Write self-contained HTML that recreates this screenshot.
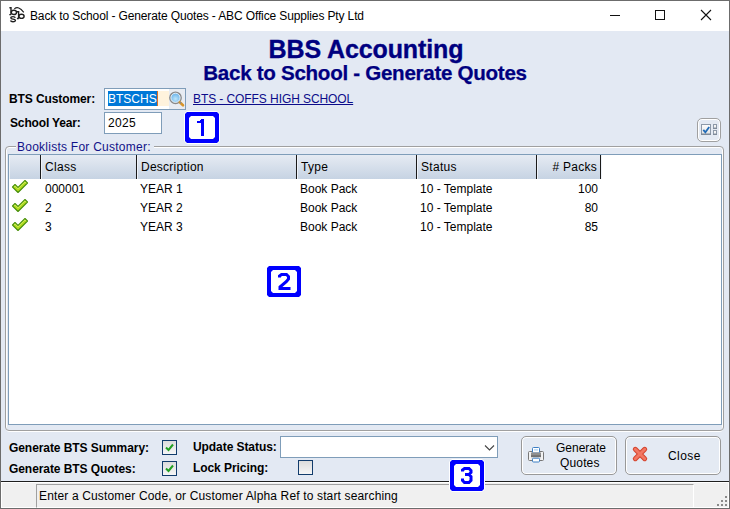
<!DOCTYPE html>
<html><head><meta charset="utf-8">
<style>
*{margin:0;padding:0;box-sizing:border-box}
html,body{width:730px;height:509px;overflow:hidden;background:#6c6c6c}
body{position:relative;font-family:"Liberation Sans",sans-serif;font-size:12px;color:#000}
.a{position:absolute;white-space:nowrap}
#title{left:1px;top:1px;width:728px;height:30px;background:#fff}
#client{left:1px;top:31px;width:728px;height:450px;background:#e3e9f3}
#sep{left:1px;top:481px;width:728px;height:1px;background:#1e1e1e}
#status{left:1px;top:482px;width:728px;height:26px;background:#f0f0f0;border:1px solid #fff}
.lbl{font-weight:bold;font-size:12px;line-height:12px}
.t12{font-size:12px;line-height:12px}
.navy{color:#000080}
.inp{border:1px solid #7f9db9;background:#fff}
.hdr{background:linear-gradient(#e6ebf3,#c6d3e3);box-shadow:inset 1px 0 0 #eef2f7}
.vs{width:1px;background:#1a1a1a;box-shadow:1px 0 0 #eef2f8}
.chk{width:15px;height:15px;border:1px solid #123c6c;background:linear-gradient(#dcdcdc,#f6f6f6)}
.badge{width:35px;height:32px;border:4px solid #0000ff;border-radius:4px;background:#fff;color:#0000ff;font-weight:bold;text-align:center;outline:1px solid #fff}
.btn{border:1px solid #999;border-radius:5px;background:#e4eaf3;box-shadow:inset 0 0 0 1px #fff}
</style></head><body>
<div class="a" id="title"></div>
<div class="a" id="client"></div>
<div class="a" id="sep"></div>
<div class="a" id="status"></div>

<!-- title bar -->
<svg class="a" style="left:6px;top:4px" width="24" height="22" viewBox="0 0 24 22">
<g fill="none" stroke="#1e1e1e" stroke-width="1.4">
<path d="M3.4 3.7H5V10.6M3.3 10.6H5.2"/>
<ellipse cx="7.9" cy="8.4" rx="2.6" ry="2.1"/>
<path d="M9.3 13.7Q9 12.6 7 12.6Q4.8 12.6 4.8 13.9Q5 15 7 15.1Q9.4 15.3 9.4 16.6Q9.2 17.7 7 17.7Q4.9 17.7 4.5 16.5"/>
<path d="M11 7.8H12.6V14.5M10.9 14.5H12.8"/>
<ellipse cx="15.5" cy="12.3" rx="2.6" ry="2.1"/>
</g>
<path d="M8.3 4.9Q12.5 1.2 17.8 8.3" fill="none" stroke="#1e1e1e" stroke-width="1.1"/>
</svg>
<div class="a t12" style="left:30px;top:10px;letter-spacing:-0.13px;color:#000">Back to School - Generate Quotes - ABC Office Supplies Pty Ltd</div>
<div class="a" style="left:610px;top:15px;width:10px;height:1px;background:#111"></div>
<div class="a" style="left:655px;top:10px;width:10px;height:10px;border:1px solid #111"></div>
<svg class="a" style="left:700px;top:9px" width="12" height="12" viewBox="0 0 12 12"><path d="M1 1 L11 11 M11 1 L1 11" stroke="#111" stroke-width="1.1"/></svg>

<!-- headings -->
<div class="a navy" style="left:1px;width:730px;text-align:center;top:37px;font-weight:bold;font-size:25px;line-height:25px;letter-spacing:-0.1px;-webkit-text-stroke:0.35px #000080">BBS Accounting</div>
<div class="a navy" style="left:0;width:730px;text-align:center;top:62px;font-weight:bold;font-size:20.6px;line-height:21px;letter-spacing:-0.3px;-webkit-text-stroke:0.25px #000080">Back to School - Generate Quotes</div>

<!-- customer -->
<div class="a lbl" style="left:9px;top:93px;letter-spacing:-0.1px">BTS Customer:</div>
<div class="a lbl" style="left:10px;top:117px;letter-spacing:-0.15px">School Year:</div>
<div class="a inp" style="left:104px;top:88px;width:82px;height:22px"></div>
<div class="a" style="left:108px;top:91px;width:61px;height:15px;background:#fff3dd"></div>
<div class="a" style="left:108px;top:91px;width:49px;height:15px;background:#0078d7"></div>
<div class="a" style="left:157px;top:91px;width:1px;height:15px;background:#e07020"></div>
<div class="a t12" style="left:108px;top:93px;color:#fff">BTSCHS</div>
<div class="a" style="left:169px;top:89px;width:16px;height:20px;background:#e8ecf2"></div>
<svg class="a" style="left:166px;top:88px" width="22" height="22" viewBox="0 0 22 22">
<defs><radialGradient id="gl" cx="0.5" cy="0.6" r="0.6"><stop offset="0" stop-color="#bfe6fa"/><stop offset="1" stop-color="#58a8e6"/></radialGradient></defs>
<circle cx="9.5" cy="9.8" r="5.6" fill="url(#gl)" stroke="#8a8a8a" stroke-width="1.6"/>
<circle cx="9.5" cy="9.8" r="4.6" fill="none" stroke="#fff" stroke-width="0.8"/>
<path d="M13.8 14.3L17 17.3" stroke="#d8952a" stroke-width="2.6" stroke-linecap="round"/>
<path d="M14 14.2L15 15.2" stroke="#7a8aa0" stroke-width="1.5"/>
</svg>
<div class="a t12 navy" style="left:193px;top:93px;text-decoration:underline;letter-spacing:-0.08px;color:#0c0c8a">BTS - COFFS HIGH SCHOOL</div>
<div class="a inp" style="left:104px;top:112px;width:58px;height:22px"></div>
<div class="a t12" style="left:108px;top:117px;letter-spacing:0.35px">2025</div>

<svg class="a" style="left:184px;top:111px" width="36" height="33" viewBox="-1 -1 36 33">
<path d="M2 -1H32L35 2V29L32 32H2L-1 29V2Z" fill="#fff"/>
<path d="M2 0H32L34 2V29L32 31H2L0 29V2Z" fill="#0000ff"/>
<path d="M6 4H28L30 6V25L28 27H6L4 25V6Z" fill="#fff"/>
<path d="M16 7H19V24H16V11H12V9H15V8H16Z" fill="#0000ff"/></svg>

<!-- small top-right button -->
<div class="a" style="left:697px;top:118px;width:24px;height:24px;border:1px solid #a0a0a0;border-radius:5px;background:#e4eaf3;box-shadow:inset 0 0 0 1px #fff"></div>
<svg class="a" style="left:700px;top:123px" width="20" height="14" viewBox="0 0 20 14">
  <defs><linearGradient id="cbg" x1="0" y1="0" x2="0" y2="1"><stop offset="0" stop-color="#fdfdfd"/><stop offset="1" stop-color="#e2e2e2"/></linearGradient></defs>
  <rect x="1.5" y="1.5" width="9" height="10" fill="url(#cbg)" stroke="#8d99a8"/>
  <rect x="1" y="10.5" width="10" height="1.5" fill="#7f8b99"/>
  <path d="M3.3 6.8 L5.4 9.3 L9.2 4" fill="none" stroke="#1f6bb8" stroke-width="1.8"/>
  <rect x="13.5" y="1.5" width="3" height="3.5" fill="#f4f4f4" stroke="#8d99a8"/>
  <rect x="13" y="5" width="4" height="1" fill="#7f8b99"/>
  <rect x="13.5" y="7.5" width="3" height="3.5" fill="#f4f4f4" stroke="#8d99a8"/>
  <rect x="13" y="11" width="4" height="1" fill="#7f8b99"/>
</svg>

<!-- group box -->
<div class="a" style="left:6px;top:147px;width:717px;height:285px;border:1px solid #fff;border-radius:3px"></div>
<div class="a" style="left:5px;top:146px;width:719px;height:285px;border:1px solid #a0a0a0;border-radius:4px"></div>
<div class="a" style="left:16px;top:140px;width:138px;height:12px;background:#e3e9f3"></div>
<div class="a t12" style="left:17px;top:141px;color:#121288;letter-spacing:0.25px">Booklists For Customer:</div>

<!-- grid -->
<div class="a" style="left:8px;top:154px;width:714px;height:271px;border:1px solid #7f9db9;background:#fff"></div>
<div class="a hdr" style="left:9px;top:155px;width:592px;height:24px"></div>
<div class="a vs" style="left:40px;top:155px;height:24px"></div>
<div class="a vs" style="left:136px;top:155px;height:24px"></div>
<div class="a vs" style="left:296px;top:155px;height:24px"></div>
<div class="a vs" style="left:416px;top:155px;height:24px"></div>
<div class="a vs" style="left:536px;top:155px;height:24px"></div>
<div class="a vs" style="left:600px;top:155px;height:24px"></div>
<div class="a t12" style="left:45px;top:161px;letter-spacing:0.3px">Class</div>
<div class="a t12" style="left:141px;top:161px;letter-spacing:0.25px">Description</div>
<div class="a t12" style="left:301px;top:161px;letter-spacing:0.3px">Type</div>
<div class="a t12" style="left:421px;top:161px;letter-spacing:0.3px">Status</div>
<div class="a t12" style="left:527px;width:70px;text-align:right;top:161px;letter-spacing:0.25px">#&nbsp;Packs</div>

<div id="rows"></div>
<!-- rows -->
<div class="a t12" style="left:45px;top:183px">000001</div>
<div class="a t12" style="left:140px;top:183px">YEAR 1</div>
<div class="a t12" style="left:300px;top:183px">Book Pack</div>
<div class="a t12" style="left:420px;top:183px">10 - Template</div>
<div class="a t12" style="left:537px;width:61px;text-align:right;top:183px">100</div>

<div class="a t12" style="left:45px;top:202px">2</div>
<div class="a t12" style="left:140px;top:202px">YEAR 2</div>
<div class="a t12" style="left:300px;top:202px">Book Pack</div>
<div class="a t12" style="left:420px;top:202px">10 - Template</div>
<div class="a t12" style="left:537px;width:61px;text-align:right;top:202px">80</div>

<div class="a t12" style="left:45px;top:221px">3</div>
<div class="a t12" style="left:140px;top:221px">YEAR 3</div>
<div class="a t12" style="left:300px;top:221px">Book Pack</div>
<div class="a t12" style="left:420px;top:221px">10 - Template</div>
<div class="a t12" style="left:537px;width:61px;text-align:right;top:221px">85</div>

<svg class="a" style="left:11px;top:179px" width="18" height="15" viewBox="0 0 18 15"><path d="M1.5 8 L4 5.5 L7 8.5 L14 1.5 L16.5 4 L7 13.5 Z" fill="#b2dc20" stroke="#488f0c" stroke-width="1.1" stroke-linejoin="round"/><path d="M3 7.8 L4 6.9 L7 9.8 L14 2.9 L15 3.9" fill="none" stroke="#d4f060" stroke-width="0.9"/></svg>
<svg class="a" style="left:11px;top:198px" width="18" height="15" viewBox="0 0 18 15"><path d="M1.5 8 L4 5.5 L7 8.5 L14 1.5 L16.5 4 L7 13.5 Z" fill="#b2dc20" stroke="#488f0c" stroke-width="1.1" stroke-linejoin="round"/><path d="M3 7.8 L4 6.9 L7 9.8 L14 2.9 L15 3.9" fill="none" stroke="#d4f060" stroke-width="0.9"/></svg>
<svg class="a" style="left:11px;top:217px" width="18" height="15" viewBox="0 0 18 15"><path d="M1.5 8 L4 5.5 L7 8.5 L14 1.5 L16.5 4 L7 13.5 Z" fill="#b2dc20" stroke="#488f0c" stroke-width="1.1" stroke-linejoin="round"/><path d="M3 7.8 L4 6.9 L7 9.8 L14 2.9 L15 3.9" fill="none" stroke="#d4f060" stroke-width="0.9"/></svg>

<svg class="a" style="left:266px;top:265px" width="36" height="33" viewBox="-1 -1 36 33">
<path d="M2 -1H32L35 2V29L32 32H2L-1 29V2Z" fill="#fff"/>
<path d="M2 0H32L34 2V29L32 31H2L0 29V2Z" fill="#0000ff"/>
<path d="M6 4H28L30 6V25L28 27H6L4 25V6Z" fill="#fff"/>
<path d="M12.5 11.5V10L14.5 8.5H19.5L21.5 10.5V13L19.5 15.5L13 21V22.5H23.5" fill="none" stroke="#0000ff" stroke-width="3" stroke-linejoin="miter"/></svg>

<!-- bottom controls -->
<div class="a lbl" style="left:9px;top:442px;letter-spacing:-0.07px">Generate BTS Summary:</div>
<div class="a lbl" style="left:9px;top:463px;letter-spacing:-0.07px">Generate BTS Quotes:</div>
<div class="a chk" style="left:162px;top:440px"></div>
<div class="a chk" style="left:162px;top:461px"></div>
<svg class="a" style="left:162px;top:440px" width="15" height="15" viewBox="0 0 15 15"><path d="M4 7.5 L6.5 10 L11 4.5" fill="none" stroke="#22a022" stroke-width="2"/></svg>
<svg class="a" style="left:162px;top:461px" width="15" height="15" viewBox="0 0 15 15"><path d="M4 7.5 L6.5 10 L11 4.5" fill="none" stroke="#22a022" stroke-width="2"/></svg>
<div class="a lbl" style="left:193px;top:441px;letter-spacing:-0.07px">Update Status:</div>
<div class="a lbl" style="left:193px;top:462px;letter-spacing:-0.07px">Lock Pricing:</div>
<div class="a inp" style="left:280px;top:436px;width:218px;height:22px"></div>
<svg class="a" style="left:484px;top:444px" width="11" height="8" viewBox="0 0 11 8"><path d="M1 1.5 L5.5 6 L10 1.5" fill="none" stroke="#444" stroke-width="1.1"/></svg>
<div class="a chk" style="left:298px;top:460px"></div>

<div class="a btn" style="left:521px;top:436px;width:96px;height:39px"></div>
<svg class="a" style="left:524px;top:443px" width="24" height="22" viewBox="0 0 24 22">
<rect x="4.5" y="8.5" width="15" height="9" rx="1" fill="#f2f2f2" stroke="#777"/>
<rect x="8.5" y="4.5" width="7" height="5.5" rx="1" fill="#fff" stroke="#3d7fc4"/>
<rect x="10" y="6.3" width="4" height="1.2" fill="#a9d0f2"/>
<rect x="7" y="9.5" width="10" height="4" fill="#8f8f8f"/>
<rect x="7" y="12.5" width="10" height="1.3" fill="#5e5e5e"/>
<rect x="7" y="14" width="10" height="1.5" fill="#d8d8d8"/>
<rect x="8.5" y="15.2" width="7" height="3.8" rx="1" fill="#fff" stroke="#3d7fc4"/>
</svg>
<div class="a t12" style="left:556px;top:442px">Generate</div>
<div class="a t12" style="left:560px;top:457px;letter-spacing:0.15px">Quotes</div>

<div class="a btn" style="left:625px;top:436px;width:96px;height:39px"></div>
<svg class="a" style="left:628px;top:443px" width="24" height="22" viewBox="0 0 24 22">
<path d="M7.3 6.3L16.7 15.7M16.7 6.3L7.3 15.7" stroke="#d4432c" stroke-width="5" stroke-linecap="round"/>
<path d="M7.3 6.3L16.7 15.7M16.7 6.3L7.3 15.7" stroke="#f27762" stroke-width="3" stroke-linecap="round"/>
</svg>
<div class="a t12" style="left:668px;top:450px;letter-spacing:0.45px">Close</div>

<svg class="a" style="left:449px;top:459px;z-index:5" width="36" height="33" viewBox="-1 -1 36 33">
<path d="M2 -1H32L35 2V29L32 32H2L-1 29V2Z" fill="#fff"/>
<path d="M2 0H32L34 2V29L32 31H2L0 29V2Z" fill="#0000ff"/>
<path d="M6 4H28L30 6V25L28 27H6L4 25V6Z" fill="#fff"/>
<path d="M12.5 11.5V10L14.5 8.5H19L21 10.5V12.5L19 14.5H15M19 14.5L21 16.5V20.5L19 22.5H14.5L12.5 20.5V18.5" fill="none" stroke="#0000ff" stroke-width="3" stroke-linejoin="miter"/></svg>

<!-- status bar -->
<div class="a" style="left:36px;top:484px;width:658px;height:24px;border-top:1px solid #a0a0a0;border-left:1px solid #a0a0a0;border-right:1px solid #fff;border-bottom:1px solid #fff"></div>
<div class="a t12" style="left:39px;top:490px;letter-spacing:0.15px">Enter a Customer Code, or Customer Alpha Ref to start searching</div>
<svg class="a" style="left:717px;top:496px" width="12" height="12" viewBox="0 0 12 12" fill="#8a8a8a">
  <rect x="8" y="0" width="2" height="2"/><rect x="4" y="4" width="2" height="2"/><rect x="8" y="4" width="2" height="2"/>
  <rect x="0" y="8" width="2" height="2"/><rect x="4" y="8" width="2" height="2"/><rect x="8" y="8" width="2" height="2"/>
</svg>
</body></html>
